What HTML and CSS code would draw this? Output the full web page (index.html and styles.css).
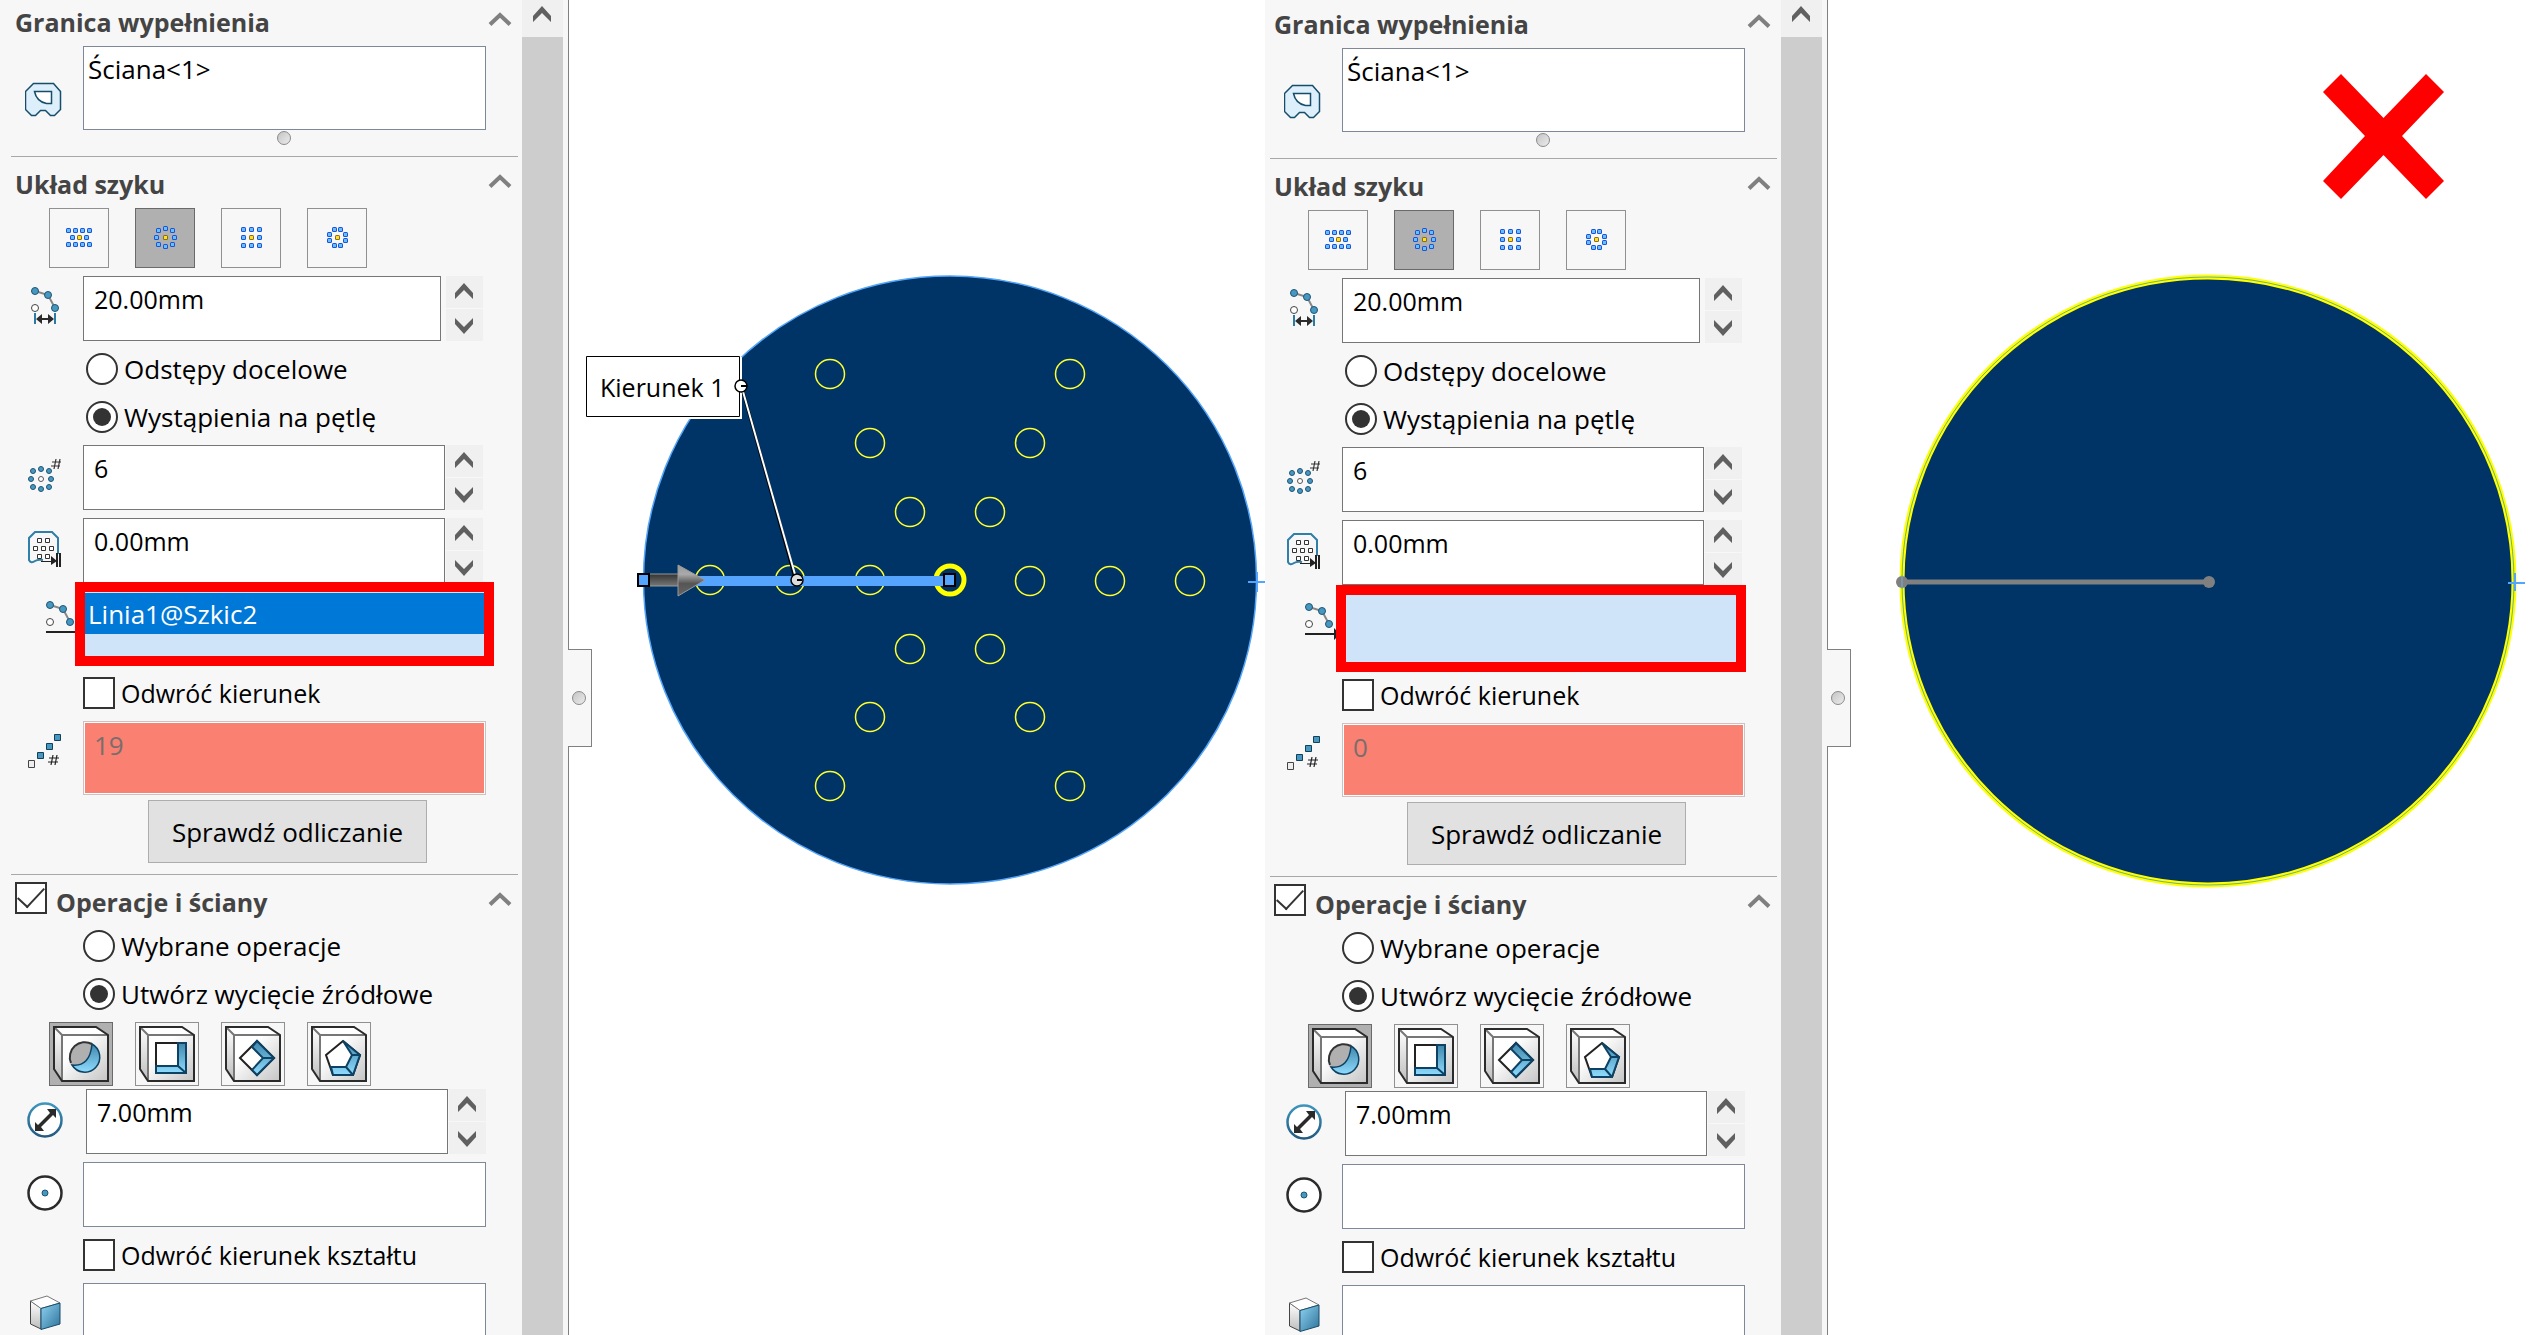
FILE: index.html
```html
<!DOCTYPE html>
<html lang="pl">
<head>
<meta charset="utf-8">
<meta name="viewport" content="width=device-width, initial-scale=1">
<title>Szyk wypełnienia</title>
<link rel="stylesheet" href="styles.css">
</head>
<body>
<svg class="defs" aria-hidden="true">
  <defs>
    <linearGradient id="g-face" x1="0" y1="0" x2="1" y2="1"><stop offset=".3" stop-color="#fff"/><stop offset="1" stop-color="#c4c4c4"/></linearGradient>
    <linearGradient id="g-side" x1="0" y1="0" x2="0" y2="1"><stop offset="0" stop-color="#fff"/><stop offset="1" stop-color="#bdbdbd"/></linearGradient>
    <linearGradient id="g-blue" x1="0" y1="0" x2="0" y2="1"><stop offset="0" stop-color="#3f86ab"/><stop offset="1" stop-color="#8fdcff"/></linearGradient>
    <linearGradient id="g-cube" x1="0" y1="0" x2="1" y2="1"><stop offset="0" stop-color="#8fd3f3"/><stop offset="1" stop-color="#2e7399"/></linearGradient>
    <linearGradient id="g-ring" x1="0" y1="0" x2="0" y2="1"><stop offset="0" stop-color="#3d95bd"/><stop offset="1" stop-color="#235a80"/></linearGradient>
    <linearGradient id="g-shaft" x1="0" y1="0" x2="0" y2="1"><stop offset="0" stop-color="#333"/><stop offset="1" stop-color="#777"/></linearGradient>
    <linearGradient id="g-head" x1="0" y1="0" x2="0" y2="1"><stop offset="0" stop-color="#999"/><stop offset=".3" stop-color="#aaa"/><stop offset=".6" stop-color="#555"/><stop offset="1" stop-color="#666"/></linearGradient>
  </defs>

  <symbol id="i-chevron" viewBox="0 0 24 14"><path d="M2 12.500 12 3l10 9.500" fill="none" stroke="#808080" stroke-width="4"/></symbol>
  <symbol id="i-up" viewBox="0 0 18 16"><path d="M9 0 18 10v6L9 7 0 16v-6z" fill="#606060"/></symbol>
  <symbol id="i-down" viewBox="0 0 18 16"><path d="M9 16 18 6V0L9 9 0 0v6z" fill="#606060"/></symbol>

  <symbol id="i-boundary" viewBox="0 0 40 40">
    <path d="M8 4h20l7 8v18l-6 6h-4l-5-5h-5l-5 5H6l-6-6V12z" transform="translate(.5 .5)" fill="#dceffa" stroke="#164d6b" stroke-width="1.500"/>
    <path d="M9.500 12.500h17v12h-5q-10-2-12-12z" fill="#fff" stroke="#164d6b" stroke-width="1.500"/>
  </symbol>
  <symbol id="i-spacing" viewBox="0 0 40 40">
    <path d="M10 4l13 4 7 13" fill="none" stroke="#888" stroke-width="2"/>
    <g fill="#4798c0" stroke="#1d5475"><circle cx="10" cy="4" r="3.500"/><circle cx="23" cy="8" r="3.500"/><circle cx="30" cy="21" r="3.500"/></g>
    <circle cx="10" cy="21" r="3.500" fill="#fff" stroke="#444"/>
    <path d="M10 26v11M30 26v11" stroke="#2b7ba5" stroke-width="2"/>
    <path d="M11 32l6-5v4h6v-4l6 5-6 5v-4h-6v4z" fill="#2b2b2b"/>
  </symbol>
  <symbol id="i-loop" viewBox="0 0 40 40">
    <g fill="#4798c0" stroke="#1d5475"><circle cx="16" cy="13" r="2.500"/><circle cx="8" cy="15" r="2.500"/><circle cx="24" cy="15" r="2.500"/><circle cx="6" cy="23" r="2.500"/><circle cx="26" cy="23" r="2.500"/><circle cx="8" cy="31" r="2.500"/><circle cx="24" cy="31" r="2.500"/><circle cx="16" cy="33" r="2.500"/></g>
    <circle cx="16" cy="23" r="2.500" fill="#fff" stroke="#555"/>
    <path d="M31 3l-2 10M35 3l-2 10M27 6h9M26 10h9" stroke="#333" stroke-width="1.200"/>
  </symbol>
  <symbol id="i-margin" viewBox="0 0 40 40">
    <path d="M33 25V9l-6-6H10L4 9v22q2 4 6 1 3-2 8-1" fill="none" stroke="#2f7fa8" stroke-width="2"/>
    <g fill="#fff" stroke="#333"><path d="M12.500 9.500h4v4h-4zM20.500 9.500h4v4h-4zM8.500 17.500h4v4h-4zM16.500 17.500h4v4h-4zM24.500 17.500h4v4h-4zM12.500 25.500h4v4h-4zM20.500 25.500h4v4h-4z"/></g>
    <path d="M16 32h10v-5l6 5-6 4v-3H16zM31 24h2v14h-2zM34 24h2v14h-2z" fill="#222"/>
  </symbol>
  <symbol id="i-direction" viewBox="0 0 56 40" overflow="visible">
    <path d="M25 1l13 4 7 13" fill="none" stroke="#888" stroke-width="2"/>
    <g fill="#4798c0" stroke="#1d5475"><circle cx="25" cy="1" r="3.500"/><circle cx="38" cy="5" r="3.500"/><circle cx="45" cy="18" r="3.500"/></g>
    <circle cx="25" cy="18" r="3.500" fill="#fff" stroke="#444"/>
    <path d="M21 27h29v-5l6 6-6 6v-5H21z" fill="#222"/>
  </symbol>
  <symbol id="i-count" viewBox="0 0 40 40">
    <g fill="#4798c0" stroke="#123f5a" stroke-width="1"><path d="M29.500 3.500h6v6h-6zM21.500 12.500h6v6h-6zM12.500 21.500h6v6h-6z"/></g>
    <path d="M3.500 29.500h6v7h-6z" fill="#eee" stroke="#444"/>
    <path d="M28 24l-2 10M32 24l-2 10M24 27h10M23 31h10" stroke="#222" stroke-width="1.200"/>
  </symbol>
  <symbol id="i-diameter" viewBox="0 0 40 40">
    <circle cx="20" cy="20" r="16.500" fill="#fff" stroke="url(#g-ring)" stroke-width="2.500"/>
    <path d="M31 9v9l-3-3-12 12 3 4h-9v-9l3 3 12-12-3-4z" fill="#2b2b2b"/>
  </symbol>
  <symbol id="i-vertex" viewBox="0 0 40 40">
    <circle cx="20" cy="20" r="16.500" fill="#fff" stroke="#2b2b2b" stroke-width="2.500"/>
    <circle cx="20" cy="20" r="3" fill="#4798c0" stroke="#1d5475"/>
  </symbol>
  <symbol id="i-cube" viewBox="0 0 40 40">
    <path d="M5.500 7 16 14v21L5.500 30z" fill="url(#g-side)" stroke="#444"/>
    <path d="M5.500 7 22 2l13 7-19 5.500z" fill="#fff" stroke="#777"/>
    <path d="M16 14.500 35 9v21l-19 5.500z" fill="url(#g-cube)" stroke="#164d6b"/>
  </symbol>

  <symbol id="d-blue" viewBox="0 0 5 5"><rect width="5" height="5" rx="1.500" fill="#1b51d8"/><rect x="1" y="1" width="3" height="3" fill="#62c0ff"/></symbol>
  <symbol id="d-gold" viewBox="0 0 5 5"><rect width="5" height="5" rx="1.500" fill="#8a6d16"/><rect x="1" y="1" width="3" height="3" fill="#ffe01c"/></symbol>
  <symbol id="p-perforation" viewBox="0 0 28 28">
    <use href="#d-blue" x="1" y="4" width="5" height="5"/><use href="#d-blue" x="8" y="4" width="5" height="5"/><use href="#d-blue" x="15" y="4" width="5" height="5"/><use href="#d-blue" x="22" y="4" width="5" height="5"/>
    <use href="#d-blue" x="5" y="11" width="5" height="5"/><use href="#d-gold" x="12" y="11" width="5" height="5"/><use href="#d-blue" x="19" y="11" width="5" height="5"/>
    <use href="#d-blue" x="1" y="18" width="5" height="5"/><use href="#d-blue" x="8" y="18" width="5" height="5"/><use href="#d-blue" x="15" y="18" width="5" height="5"/><use href="#d-blue" x="22" y="18" width="5" height="5"/>
  </symbol>
  <symbol id="p-circular" viewBox="0 0 28 28">
    <use href="#d-blue" x="12" y="2" width="5" height="5"/><use href="#d-blue" x="5" y="4" width="5" height="5"/><use href="#d-blue" x="19" y="4" width="5" height="5"/>
    <use href="#d-blue" x="3" y="11" width="5" height="5"/><use href="#d-gold" x="12" y="11" width="5" height="5"/><use href="#d-blue" x="21" y="11" width="5" height="5"/>
    <use href="#d-blue" x="5" y="18" width="5" height="5"/><use href="#d-blue" x="19" y="18" width="5" height="5"/><use href="#d-blue" x="12" y="20" width="5" height="5"/>
  </symbol>
  <symbol id="p-square" viewBox="0 0 28 28">
    <use href="#d-blue" x="4" y="3" width="5" height="5"/><use href="#d-blue" x="12" y="3" width="5" height="5"/><use href="#d-blue" x="20" y="3" width="5" height="5"/>
    <use href="#d-blue" x="4" y="11" width="5" height="5"/><use href="#d-gold" x="12" y="11" width="5" height="5"/><use href="#d-blue" x="20" y="11" width="5" height="5"/>
    <use href="#d-blue" x="4" y="19" width="5" height="5"/><use href="#d-blue" x="12" y="19" width="5" height="5"/><use href="#d-blue" x="20" y="19" width="5" height="5"/>
  </symbol>
  <symbol id="p-polygon" viewBox="0 0 28 28">
    <use href="#d-blue" x="9" y="3" width="5" height="5"/><use href="#d-blue" x="15" y="3" width="5" height="5"/>
    <use href="#d-blue" x="4" y="8" width="5" height="5"/><use href="#d-blue" x="20" y="8" width="5" height="5"/><use href="#d-gold" x="12" y="11" width="5" height="5"/>
    <use href="#d-blue" x="4" y="14" width="5" height="5"/><use href="#d-blue" x="20" y="14" width="5" height="5"/>
    <use href="#d-blue" x="9" y="19" width="5" height="5"/><use href="#d-blue" x="15" y="19" width="5" height="5"/>
  </symbol>

  <symbol id="s-block" viewBox="0 0 62 62">
    <path d="M4 4 12 12v46L4 46z" fill="url(#g-side)"/><path d="M4 4h42l12 8H12z" fill="#fff"/><path d="M12 12h46v46H12z" fill="url(#g-face)"/>
    <path d="M4 4l8 8v46M12 12h46" fill="none" stroke="#777" stroke-width="2"/>
    <path d="M4 4h42l12 8v46H12L4 46z" fill="none" stroke="#2b2b2b" stroke-width="2"/>
  </symbol>
  <symbol id="s-circle" viewBox="0 0 62 62">
    <use href="#s-block" width="62" height="62"/>
    <circle cx="35" cy="35" r="15" fill="#b0b0b0"/>
    <path d="M42 21a15 15 0 1 1-20 21q18 2 20-21z" fill="url(#g-blue)" stroke="#0d4264" stroke-width="1.500"/>
    <path d="M21 40a15 15 0 0 1 21-19" fill="none" stroke="#333" stroke-width="2"/>
  </symbol>
  <symbol id="s-square" viewBox="0 0 62 62">
    <use href="#s-block" width="62" height="62"/>
    <path d="M20 20h30v30H20z" fill="#fff" stroke="#222" stroke-width="2"/>
    <path d="M42 20h8v30H20v-7h22zM42 43l8 7" fill="url(#g-blue)" stroke="#0d4264" stroke-width="2"/>
  </symbol>
  <symbol id="s-diamond" viewBox="0 0 62 62">
    <use href="#s-block" width="62" height="62"/>
    <path d="M18 35 35 18 52 35 35 52z" fill="#fff" stroke="#222" stroke-width="2"/>
    <path d="M35 18 52 35 35 52 30 47 41 35 30 24zM41 35h11" fill="url(#g-blue)" stroke="#0d4264" stroke-width="2"/>
  </symbol>
  <symbol id="s-pentagon" viewBox="0 0 62 62">
    <use href="#s-block" width="62" height="62"/>
    <path d="M18 32 35 18 52 32 45 52H25z" fill="#fff" stroke="#222" stroke-width="2"/>
    <path d="M35 18 52 32 45 52H25l-2-8h15l6-12z M44 32h8M38 44l7 8" fill="url(#g-blue)" stroke="#0d4264" stroke-width="2"/>
  </symbol>
</svg>

<main class="compare">
  <aside class="panel">
    <form class="panel-body">
      <section class="group">
        <header class="group-head"><h2>Granica wypełnienia</h2><button type="button" class="toggle" aria-label="Zwiń"><svg><use href="#i-chevron"/></svg></button></header>
        <div class="row row-boundary"><svg class="icon"><use href="#i-boundary"/></svg><ul class="list list-tall" role="listbox" aria-label="Granica"><li role="option">Ściana&lt;1&gt;</li></ul></div>
        <div class="grip"></div>
      </section>
      <section class="group ruled">
        <header class="group-head"><h2>Układ szyku</h2><button type="button" class="toggle" aria-label="Zwiń"><svg><use href="#i-chevron"/></svg></button></header>
        <div class="tiles tiles-pattern">
          <button type="button" aria-label="Perforacja"><svg><use href="#p-perforation"/></svg></button>
          <button type="button" class="on" aria-label="Kołowy"><svg><use href="#p-circular"/></svg></button>
          <button type="button" aria-label="Kwadratowy"><svg><use href="#p-square"/></svg></button>
          <button type="button" aria-label="Wielokątny"><svg><use href="#p-polygon"/></svg></button>
        </div>
        <div class="row"><svg class="icon"><use href="#i-spacing"/></svg>
          <div class="spin spin-wide-gap"><input type="text" value="20.00mm" aria-label="Odstępy pętli"><span class="steps"><button type="button" aria-label="Więcej"><svg><use href="#i-up"/></svg></button><button type="button" aria-label="Mniej"><svg><use href="#i-down"/></svg></button></span></div></div>
        <div class="choices inset">
          <label><input type="radio" name="space-a">Odstępy docelowe</label>
          <label><input type="radio" name="space-a" checked>Wystąpienia na pętlę</label>
        </div>
        <div class="row"><svg class="icon"><use href="#i-loop"/></svg>
          <div class="spin"><input type="text" value="6" aria-label="Liczba wystąpień"><span class="steps"><button type="button" aria-label="Więcej"><svg><use href="#i-up"/></svg></button><button type="button" aria-label="Mniej"><svg><use href="#i-down"/></svg></button></span></div></div>
        <div class="row tight"><svg class="icon"><use href="#i-margin"/></svg>
          <div class="spin"><input type="text" value="0.00mm" aria-label="Marginesy"><span class="steps"><button type="button" aria-label="Więcej"><svg><use href="#i-up"/></svg></button><button type="button" aria-label="Mniej"><svg><use href="#i-down"/></svg></button></span></div></div>
        <div class="row tight"><svg class="icon icon-wide"><use href="#i-direction"/></svg>
          <div class="marked marked-a"><ul class="list list-active" role="listbox" aria-label="Kierunek szyku"><li role="option" aria-selected="true">Linia1@Szkic2</li></ul></div></div>
        <div class="choices choices-check choices-marked"><label><input type="checkbox">Odwróć kierunek</label></div>
        <div class="row row-count"><svg class="icon"><use href="#i-count"/></svg><input class="count" type="text" value="19" disabled aria-label="Liczba"></div>
        <button type="button" class="check-count">Sprawdź odliczanie</button>
      </section>
      <section class="group ruled">
        <header class="group-head"><label class="title"><input type="checkbox" checked><span>Operacje i ściany</span></label><button type="button" class="toggle" aria-label="Zwiń"><svg><use href="#i-chevron"/></svg></button></header>
        <div class="choices choices-top">
          <label><input type="radio" name="feat-a">Wybrane operacje</label>
          <label><input type="radio" name="feat-a" checked>Utwórz wycięcie źródłowe</label>
        </div>
        <div class="tiles tiles-shape">
          <button type="button" class="on" aria-label="Okrąg"><svg><use href="#s-circle"/></svg></button>
          <button type="button" aria-label="Kwadrat"><svg><use href="#s-square"/></svg></button>
          <button type="button" aria-label="Romb"><svg><use href="#s-diamond"/></svg></button>
          <button type="button" aria-label="Wielokąt"><svg><use href="#s-pentagon"/></svg></button>
        </div>
        <div class="row"><svg class="icon"><use href="#i-diameter"/></svg>
          <div class="spin inset"><input type="text" value="7.00mm" aria-label="Średnica"><span class="steps"><button type="button" aria-label="Więcej"><svg><use href="#i-up"/></svg></button><button type="button" aria-label="Mniej"><svg><use href="#i-down"/></svg></button></span></div></div>
        <div class="row tight"><svg class="icon"><use href="#i-vertex"/></svg><ul class="list" role="listbox" aria-label="Wierzchołek"></ul></div>
        <div class="choices choices-check"><label><input type="checkbox">Odwróć kierunek kształtu</label></div>
        <div class="row"><svg class="icon"><use href="#i-cube"/></svg><ul class="list" role="listbox" aria-label="Ściany"></ul></div>
      </section>
    </form>
    <div class="scrollbar"><button type="button" aria-label="W górę"><svg><use href="#i-up"/></svg></button></div>
    <div class="edge"></div>
    <div class="handle"></div>
  </aside>

  <section class="view">
    <svg viewBox="0 0 696 1335" role="img" aria-label="Podgląd szyku">
      <ellipse cx="381" cy="580" rx="306.500" ry="304" fill="#003366" stroke="#55a5f8" stroke-width="1.500"/>
      <g fill="none" stroke="#ffff2e" stroke-width="1.500" transform="translate(1 0)">
        <circle cx="260" cy="374" r="14.500"/><circle cx="500" cy="374" r="14.500"/>
        <circle cx="300" cy="443" r="14.500"/><circle cx="460" cy="443" r="14.500"/>
        <circle cx="340" cy="512" r="14.500"/><circle cx="420" cy="512" r="14.500"/>
        <circle cx="140" cy="580" r="14.500"/><circle cx="220" cy="580" r="14.500"/><circle cx="300" cy="580" r="14.500"/>
        <circle cx="460" cy="581" r="14.500"/><circle cx="540" cy="581" r="14.500"/><circle cx="620" cy="581" r="14.500"/>
        <circle cx="340" cy="649" r="14.500"/><circle cx="420" cy="649" r="14.500"/>
        <circle cx="300" cy="717" r="14.500"/><circle cx="460" cy="717" r="14.500"/>
        <circle cx="260" cy="786" r="14.500"/><circle cx="500" cy="786" r="14.500"/>
      </g>
      <circle cx="381" cy="580" r="14" fill="none" stroke="#ff0" stroke-width="5"/>
      <path d="M75 581h306" stroke="#55a5ff" stroke-width="10"/>
      <path d="M80 574h30v12H80z" fill="url(#g-shaft)" stroke="#999" stroke-width="1"/>
      <path d="M109 565 136 580 109 596z" fill="url(#g-head)" stroke="#999"/>
      <path d="M69 574h11v12H69zM375 574h11v12h-11z" fill="#55a5ff" stroke="#000" stroke-width="2"/>
      <path d="M679 582h17M688 572v20" stroke="#55a5ff" stroke-width="2"/>
      <path d="M18 357h155v62H18z" fill="#fff"/>
      <path d="M17.500 356.500h153v60h-153z" fill="#fff" stroke="#000"/>
      <text class="callout" x="31" y="397">Kierunek 1</text>
      <path d="M173 388 226 578" stroke="#000" stroke-width="3"/><path d="M173 388 227 578" stroke="#fff" stroke-width="2"/>
      <circle cx="172" cy="386" r="6" fill="#fff" stroke="#000" stroke-width="1.500"/><path d="M172 386h6" stroke="#000" stroke-width="2"/>
      <circle cx="228" cy="580" r="6" fill="#ddd" stroke="#000" stroke-width="1.500"/><path d="M228 580h5" stroke="#000" stroke-width="2"/>
    </svg>
  </section>

  <aside class="panel panel-second">
    <form class="panel-body">
      <section class="group">
        <header class="group-head"><h2>Granica wypełnienia</h2><button type="button" class="toggle" aria-label="Zwiń"><svg><use href="#i-chevron"/></svg></button></header>
        <div class="row row-boundary"><svg class="icon"><use href="#i-boundary"/></svg><ul class="list list-tall" role="listbox" aria-label="Granica"><li role="option">Ściana&lt;1&gt;</li></ul></div>
        <div class="grip"></div>
      </section>
      <section class="group ruled">
        <header class="group-head"><h2>Układ szyku</h2><button type="button" class="toggle" aria-label="Zwiń"><svg><use href="#i-chevron"/></svg></button></header>
        <div class="tiles tiles-pattern">
          <button type="button" aria-label="Perforacja"><svg><use href="#p-perforation"/></svg></button>
          <button type="button" class="on" aria-label="Kołowy"><svg><use href="#p-circular"/></svg></button>
          <button type="button" aria-label="Kwadratowy"><svg><use href="#p-square"/></svg></button>
          <button type="button" aria-label="Wielokątny"><svg><use href="#p-polygon"/></svg></button>
        </div>
        <div class="row"><svg class="icon"><use href="#i-spacing"/></svg>
          <div class="spin spin-wide-gap"><input type="text" value="20.00mm" aria-label="Odstępy pętli"><span class="steps"><button type="button" aria-label="Więcej"><svg><use href="#i-up"/></svg></button><button type="button" aria-label="Mniej"><svg><use href="#i-down"/></svg></button></span></div></div>
        <div class="choices inset">
          <label><input type="radio" name="space-b">Odstępy docelowe</label>
          <label><input type="radio" name="space-b" checked>Wystąpienia na pętlę</label>
        </div>
        <div class="row"><svg class="icon"><use href="#i-loop"/></svg>
          <div class="spin"><input type="text" value="6" aria-label="Liczba wystąpień"><span class="steps"><button type="button" aria-label="Więcej"><svg><use href="#i-up"/></svg></button><button type="button" aria-label="Mniej"><svg><use href="#i-down"/></svg></button></span></div></div>
        <div class="row tight"><svg class="icon"><use href="#i-margin"/></svg>
          <div class="spin"><input type="text" value="0.00mm" aria-label="Marginesy"><span class="steps"><button type="button" aria-label="Więcej"><svg><use href="#i-up"/></svg></button><button type="button" aria-label="Mniej"><svg><use href="#i-down"/></svg></button></span></div></div>
        <div class="row tight"><svg class="icon icon-wide"><use href="#i-direction"/></svg>
          <div class="marked marked-b"><ul class="list list-active" role="listbox" aria-label="Kierunek szyku"></ul></div></div>
        <div class="choices choices-check choices-marked"><label><input type="checkbox">Odwróć kierunek</label></div>
        <div class="row row-count"><svg class="icon"><use href="#i-count"/></svg><input class="count" type="text" value="0" disabled aria-label="Liczba"></div>
        <button type="button" class="check-count">Sprawdź odliczanie</button>
      </section>
      <section class="group ruled">
        <header class="group-head"><label class="title"><input type="checkbox" checked><span>Operacje i ściany</span></label><button type="button" class="toggle" aria-label="Zwiń"><svg><use href="#i-chevron"/></svg></button></header>
        <div class="choices choices-top">
          <label><input type="radio" name="feat-b">Wybrane operacje</label>
          <label><input type="radio" name="feat-b" checked>Utwórz wycięcie źródłowe</label>
        </div>
        <div class="tiles tiles-shape">
          <button type="button" class="on" aria-label="Okrąg"><svg><use href="#s-circle"/></svg></button>
          <button type="button" aria-label="Kwadrat"><svg><use href="#s-square"/></svg></button>
          <button type="button" aria-label="Romb"><svg><use href="#s-diamond"/></svg></button>
          <button type="button" aria-label="Wielokąt"><svg><use href="#s-pentagon"/></svg></button>
        </div>
        <div class="row"><svg class="icon"><use href="#i-diameter"/></svg>
          <div class="spin inset"><input type="text" value="7.00mm" aria-label="Średnica"><span class="steps"><button type="button" aria-label="Więcej"><svg><use href="#i-up"/></svg></button><button type="button" aria-label="Mniej"><svg><use href="#i-down"/></svg></button></span></div></div>
        <div class="row tight"><svg class="icon"><use href="#i-vertex"/></svg><ul class="list" role="listbox" aria-label="Wierzchołek"></ul></div>
        <div class="choices choices-check"><label><input type="checkbox">Odwróć kierunek kształtu</label></div>
        <div class="row"><svg class="icon"><use href="#i-cube"/></svg><ul class="list" role="listbox" aria-label="Ściany"></ul></div>
      </section>
    </form>
    <div class="scrollbar"><button type="button" aria-label="W górę"><svg><use href="#i-up"/></svg></button></div>
    <div class="edge"></div>
    <div class="handle"></div>
  </aside>

  <section class="view">
    <svg viewBox="-1 0 715 1335" role="img" aria-label="Brak podglądu szyku">
      <ellipse cx="379" cy="581" rx="306" ry="304" fill="#003366" stroke="#ff0" stroke-width="5"/>
      <ellipse cx="379" cy="581" rx="306" ry="304" fill="none" stroke="#6fb08a" stroke-width="1"/>
      <path d="M73 582h307" stroke="#808080" stroke-width="5"/>
      <circle cx="73" cy="582" r="6" fill="#808080"/><circle cx="380" cy="582" r="6" fill="#808080"/>
      <path d="M73 575v14" stroke="#6ab0d8"/>
      <path d="M679 583h17M686 573v18" stroke="#55a5ff" stroke-width="2"/>
      <path d="M512 74 554.500 118 597 74 615 92 573 136 615 181 597 199 554.500 155 512 199 494 181 536 136 494 92z" fill="#f00"/>
    </svg>
  </section>
</main>
</body>
</html>
```
FILE: styles.css
```css
* {
  box-sizing: border-box;
}

body {
  margin: 0;
  background: #fff;
  color: #000;
  font: 26px/32px "Open Sans", "Noto Sans", sans-serif;
}

button,
input {
  margin: 0;
  padding: 0;
  font: inherit;
  color: inherit;
}

ul {
  margin: 0;
  padding: 0;
  list-style: none;
}

svg {
  display: block;
}

.defs {
  position: absolute;
  width: 0;
  height: 0;
}

.compare {
  display: grid;
  grid-template-columns: 569px 696fr 563px 715fr;
  height: 100vh;
  overflow: hidden;
}

/* Property panel */

.panel {
  position: relative;
  z-index: 1;
  display: flex;
  min-height: 0;
  background: #f7f7f7;
}

.panel-body {
  flex: 1;
  min-width: 0;
  margin-top: -5px;
  padding: 0 4px 0 11px;
}

.panel-second .panel-body {
  margin-top: -3px;
  padding-left: 5px;
}

.scrollbar {
  width: 41px;
  background: #cdcdcd;
}

.scrollbar button {
  display: grid;
  place-items: center;
  width: 100%;
  height: 37px;
  padding: 0 2px 9px 0;
  border: 0;
  background: #f0f0f0;
}

.scrollbar svg,
.steps svg {
  width: 18px;
  height: 16px;
}

.edge {
  width: 6px;
  border-right: 1px solid #808080;
}

.handle {
  position: absolute;
  top: 649px;
  left: calc(100% - 1px);
  display: grid;
  place-items: center;
  width: 24px;
  height: 98px;
  padding-right: 2px;
  border: 1px solid #808080;
  border-left: 0;
  background: #f7f7f7;
}

.handle::before,
.grip::before {
  content: "";
  display: block;
  width: 12px;
  height: 12px;
  border: 1px solid #8a8a8a;
  border-radius: 50%;
  background: linear-gradient(135deg, #c4c4c4, #ececec);
}

.grip {
  display: grid;
  place-items: center;
  height: 26px;
  padding: 0 0 10px 38px;
}

.ruled {
  border-top: 1px solid #a8a8a8;
}

.group-head {
  display: flex;
  justify-content: space-between;
  height: 51px;
  padding: 0 6px 0 4px;
  color: #444;
  font-size: 25px;
  font-weight: 700;
  line-height: 54px;
}

.group-head h2 {
  margin: 0;
  font-size: inherit;
}

.title {
  display: flex;
  gap: 9px;
}

.title input {
  margin-top: 7px;
}

.toggle {
  width: 24px;
  height: 14px;
  margin-top: 17px;
  border: 0;
  background: none;
}

.toggle svg {
  width: 24px;
  height: 14px;
}

/* Rows of one icon and one field */

.row {
  display: grid;
  grid-template-columns: 58px 403px;
  align-items: center;
  padding-left: 14px;
}

.row.tight {
  margin-top: 8px;
}

.icon {
  width: 40px;
  height: 40px;
  margin-bottom: 4px;
}

.row-boundary .icon {
  margin-top: 26px;
}

.row-count .icon {
  margin-bottom: 14px;
}

.icon-wide {
  width: 56px;
  overflow: visible;
}

.list {
  height: 65px;
  padding: 1px;
  border: 1px solid #7f8899;
  background: #fff;
  line-height: 39px;
}

.list-tall {
  height: 84px;
}

.list li {
  padding: 2px 0 0 3px;
}

.list-active {
  height: 70px;
  border-color: #90bfe8;
  background: #cfe4f8;
}

.list-active li {
  background: #0078d7;
  color: #fff;
}

.marked {
  position: relative;
}

.marked::after {
  content: "";
  position: absolute;
  border: 10px solid #f00;
}

.marked-a::after {
  inset: -9px -8px -5px;
}

.marked-b::after {
  inset: -8px -1px -9px -6px;
}

.spin {
  display: flex;
  gap: 1px;
  width: 400px;
}

.spin-wide-gap {
  gap: 5px;
}

.spin.inset {
  margin-left: 3px;
}

.spin input {
  flex: 1;
  min-width: 0;
  height: 65px;
  padding: 0 10px 20px;
  border: 1px solid #767676;
  background: #fff;
  font-size: 25px;
}

.steps {
  display: grid;
  grid-template-rows: 1fr 1fr;
  gap: 1px;
  width: 37px;
}

.steps button {
  display: grid;
  place-items: center;
  padding: 0 2px 2px 0;
  border: 0;
  background: #f0f0f0;
}

.steps button + button {
  padding: 2px 2px 0 0;
}

.count {
  width: 100%;
  height: 74px;
  padding: 0 10px 27px;
  border: 1px solid #c9c3c3;
  outline: 1px solid #fff;
  outline-offset: -2px;
  background: #fa8072;
  color: #7a6e6c;
}

.choices {
  display: grid;
  gap: 16px;
  padding: 12px 0 12px 72px;
}

.choices.inset {
  padding-left: 75px;
}

.choices-check {
  font-size: 25px;
}

.choices-marked {
  padding-top: 16px;
}

.choices-top {
  padding-top: 4px;
}

.choices label {
  display: flex;
  align-items: center;
  gap: 6px;
  height: 32px;
  line-height: 34px;
}

input[type="radio"],
input[type="checkbox"] {
  appearance: none;
  flex: none;
  display: grid;
  place-items: center;
  width: 32px;
  height: 32px;
  border: 2px solid #333;
  background: #fff;
}

input[type="radio"] {
  border-radius: 50%;
}

input[type="radio"]:checked::before {
  content: "";
  width: 18px;
  height: 18px;
  border-radius: 50%;
  background: #333;
}

input[type="checkbox"]:checked::before {
  content: "";
  width: 24px;
  height: 12px;
  margin-top: -8px;
  border: solid #333;
  border-width: 0 0 2px 2px;
  transform: rotate(-47deg);
}

.tiles {
  display: grid;
  grid-template-columns: repeat(4, 60px);
  gap: 26px;
  padding-left: 38px;
}

.tiles-pattern {
  margin-bottom: 8px;
}

.tiles button {
  display: grid;
  place-items: center;
  height: 60px;
  border: 1px solid #909090;
  background: #f7f7f7;
}

.tiles .on {
  border-color: #6a6a6a;
  background: #b0b0b0;
}

.tiles-pattern svg {
  width: 28px;
  height: 28px;
}

.tiles-shape {
  grid-template-columns: repeat(4, 64px);
  gap: 22px;
  margin-bottom: 3px;
}

.tiles-shape button {
  height: 64px;
}

.tiles-shape svg {
  width: 62px;
  height: 62px;
}

.check-count {
  display: block;
  width: 279px;
  height: 63px;
  margin: 5px 0 11px 137px;
  border: 1px solid #adadad;
  background: #e1e1e1;
}

/* Model view */

.view {
  min-width: 0;
  overflow: hidden;
}

.view svg {
  width: 100%;
  height: 100%;
}

.callout {
  font-size: 25px;
}
```
